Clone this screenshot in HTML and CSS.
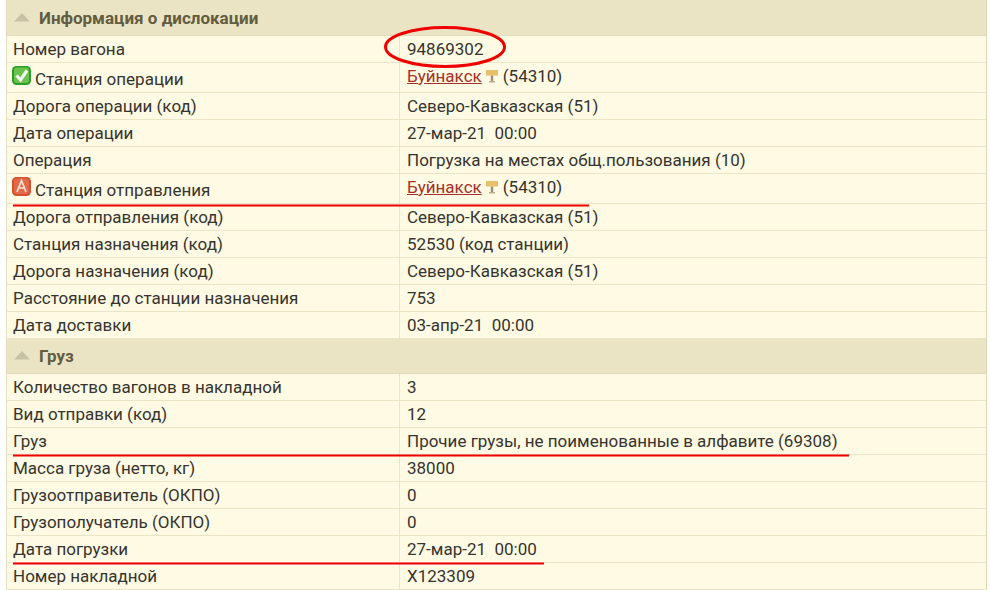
FILE: index.html
```html
<!DOCTYPE html>
<html lang="ru">
<head>
<meta charset="utf-8">
<title>Информация о дислокации</title>
<link rel="stylesheet" href="styles.css">
</head>
<body>
<div class="sheet">
<table class="info">
<colgroup><col class="c1"><col class="c2"></colgroup>
<tbody>
<tr class="head first"><th colspan="2"><svg class="tri" width="16" height="9" viewBox="0 0 16 9"><path d="M8 0 L16 8.5 H0 Z"/></svg>Информация о дислокации</th></tr>
<tr><td>Номер вагона</td><td>94869302</td></tr>
<tr class="tall"><td><svg class="ic" width="19" height="19" viewBox="0 0 19 19"><rect width="19" height="19" rx="4.5" fill="#2c9e2a"/><rect x="2" y="1.5" width="15" height="15.5" rx="3" fill="#6cc24f"/><path d="M4.5 9.5 L8.5 14 L15 4.5" fill="none" stroke="#f3faec" stroke-width="3.2"/></svg>Станция операции</td><td class="up"><a href="#">Буйнакск</a><svg class="sign" width="14" height="14" viewBox="0 0 14 14"><path d="M1 1 H13 V6.5 H1 Z" fill="#e9bf6c"/><path d="M5.8 6.5 H8.2 V12 H5.8 Z" fill="#9b9073"/><path d="M4 12 H10 V13.5 H4 Z" fill="#b9ae90"/></svg>(54310)</td></tr>
<tr><td>Дорога операции (код)</td><td>Северо-Кавказская (51)</td></tr>
<tr><td>Дата операции</td><td>27-мар-21&nbsp; 00:00</td></tr>
<tr><td>Операция</td><td>Погрузка на местах общ.пользования (10)</td></tr>
<tr class="taller"><td><svg class="ic" width="19" height="19" viewBox="0 0 19 19"><rect width="19" height="19" rx="4.5" fill="#d4512f"/><rect x="2" y="1.5" width="15" height="15.5" rx="3" fill="#e2694a"/><path d="M5 15 L9.5 3.5 L14 15 M6.8 11 H12.2" fill="none" stroke="#f8e2d2" stroke-width="1.7"/></svg>Станция отправления</td><td class="up"><a href="#">Буйнакск</a><svg class="sign" width="14" height="14" viewBox="0 0 14 14"><path d="M1 1 H13 V6.5 H1 Z" fill="#e9bf6c"/><path d="M5.8 6.5 H8.2 V12 H5.8 Z" fill="#9b9073"/><path d="M4 12 H10 V13.5 H4 Z" fill="#b9ae90"/></svg>(54310)</td></tr>
<tr><td>Дорога отправления (код)</td><td>Северо-Кавказская (51)</td></tr>
<tr><td>Станция назначения (код)</td><td>52530 (код станции)</td></tr>
<tr><td>Дорога назначения (код)</td><td>Северо-Кавказская (51)</td></tr>
<tr><td>Расстояние до станции назначения</td><td>753</td></tr>
<tr><td>Дата доставки</td><td>03-апр-21&nbsp; 00:00</td></tr>
<tr class="head second"><th colspan="2"><svg class="tri" width="16" height="9" viewBox="0 0 16 9"><path d="M8 0 L16 8.5 H0 Z"/></svg>Груз</th></tr>
<tr><td>Количество вагонов в накладной</td><td>3</td></tr>
<tr><td>Вид отправки (код)</td><td>12</td></tr>
<tr><td>Груз</td><td>Прочие грузы, не поименованные в алфавите (69308)</td></tr>
<tr><td>Масса груза (нетто, кг)</td><td>38000</td></tr>
<tr><td>Грузоотправитель (ОКПО)</td><td>0</td></tr>
<tr><td>Грузополучатель (ОКПО)</td><td>0</td></tr>
<tr><td>Дата погрузки</td><td>27-мар-21&nbsp; 00:00</td></tr>
<tr><td>Номер накладной</td><td>Х123309</td></tr>
</tbody>
</table>
<svg class="marks" width="990" height="590" viewBox="0 0 990 590">
<ellipse cx="445" cy="47" rx="59.5" ry="19.5"/>
<path d="M13 205.5 H589 M13 455.5 H849 M13 563.5 H544"/>
</svg>
</div>
</body>
</html>
```
FILE: styles.css
```css
html, body {
  margin: 0;
  padding: 0;
  background: #fff;
}
.sheet {
  position: relative;
  width: 990px;
  height: 590px;
  overflow: hidden;
  padding-left: 6px;
  box-sizing: border-box;
}
.info {
  width: 981px;
  border-collapse: collapse;
  table-layout: fixed;
  font: 17px/20px Roboto, sans-serif;
  color: #35342f;
  background: #fffae3;
  border-right: 1px solid #dcd5b8;
  border-left: 1px solid #e4ddc0;
}
.c1 { width: 393px; }
.info td {
  height: 26px;
  padding: 0 6px;
  border: 1px solid #ece4c6;
  border-width: 0 0 1px 0;
  vertical-align: middle;
  white-space: pre;
  box-sizing: content-box;
}
.info td + td {
  border-left: 1px solid #ece4c6;
  padding-left: 7px;
}
.tall td { height: 29px; }
.taller td { height: 29px; }
.info td.up { vertical-align: top; padding-top: 3px; height: auto; }
.head th {
  height: 35px;
  padding: 0 0 0 7px;
  text-align: left;
  font-size: 17px;
  font-weight: 700;
  color: #625c40;
  background: #ebe4c4;
  border-bottom: 1px solid #e2dabb;
}
.head.second th { height: 34px; }
.tri {
  fill: #c8c2a4;
  margin-right: 9px;
  vertical-align: 2px;
}
.ic {
  margin: 0 4px 0 -1px;
  vertical-align: 0;
}
.sign {
  margin: 0 4px 0 3px;
  vertical-align: -1px;
}
a {
  color: #a5312a;
  text-decoration: underline;
}
.marks {
  position: absolute;
  left: 0;
  top: 0;
  fill: none;
  stroke: #ee0000;
  stroke-width: 2;
  pointer-events: none;
}
.marks ellipse { stroke-width: 3; }
```
